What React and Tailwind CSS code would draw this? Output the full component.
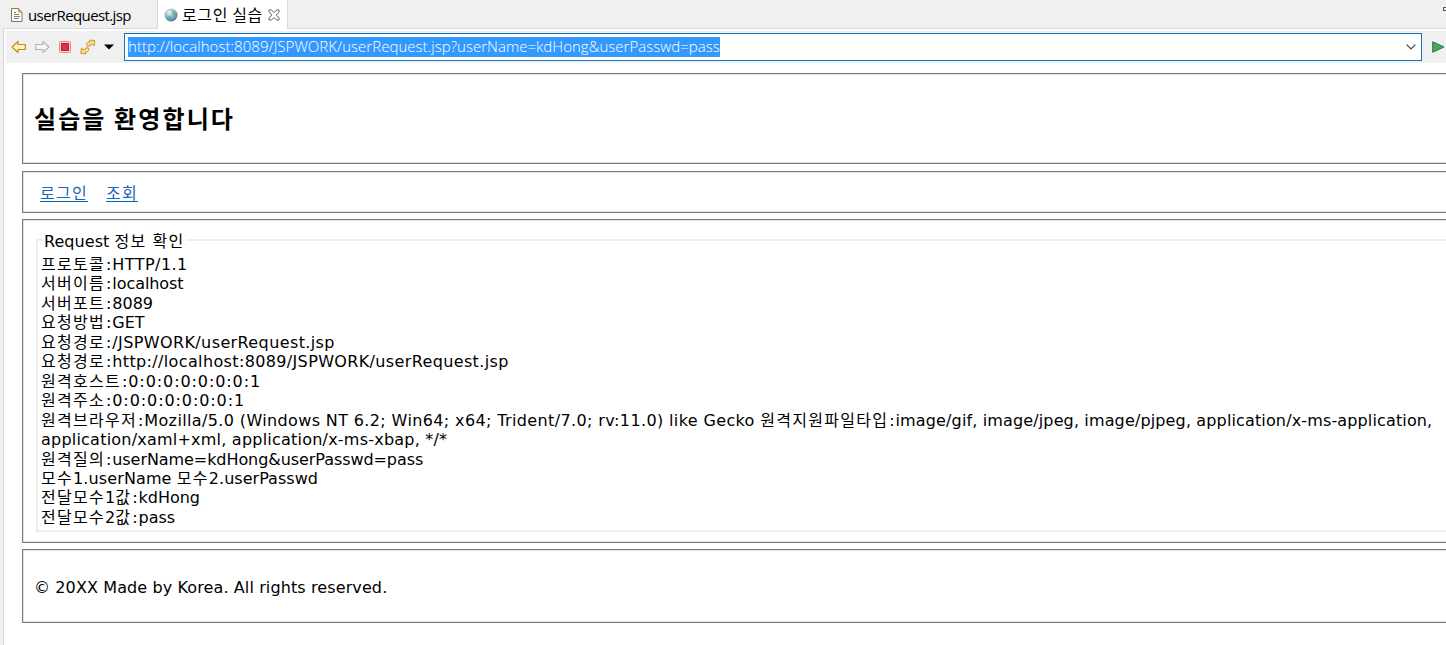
const rows = [
  [['프로토콜', 'ko'], [':HTTP/1.1', 'tracking-[0.46px]']],
  [['서버이름', 'ko'], [':localhost', 'tracking-[-0.06px]']],
  [['서버포트', 'ko'], [':8089', 'tracking-[0px]']],
  [['요청방법', 'ko'], [':GET', 'tracking-[0px]']],
  [['요청경로', 'ko'], [':/JSPWORK/userRequest.jsp', 'tracking-[0.39px]']],
  [['요청경로', 'ko'], [':http://localhost:8089/JSPWORK/userRequest.jsp', 'tracking-[0.36px]']],
  [['원격호스트', 'ko'], [':0:0:0:0:0:0:0:1', 'tracking-[0.91px]']],
  [['원격주소', 'ko'], [':0:0:0:0:0:0:0:1', 'tracking-[0.91px]']],
  [
    ['원격브라우저', 'ko'],
    [':Mozilla/5.0 (Windows NT 6.2; Win64; x64; Trident/7.0; rv:11.0) like Gecko ', 'tracking-[0.37px]'],
    ['원격지원파일타입', 'ko'],
    [':image/gif, image/jpeg, image/pjpeg, application/x-ms-application,', 'tracking-[0.14px]'],
  ],
  [['application/xaml+xml, application/x-ms-xbap, */*', 'tracking-[0.22px]']],
  [['원격질의', 'ko'], [':userName=kdHong&userPasswd=pass', 'tracking-[-0.07px]']],
  [['모수', 'ko'], ['1.userName ', 'tracking-[0.12px]'], ['모수', 'ko'], ['2.userPasswd', 'tracking-[0.03px]']],
  [['전달모수', 'ko'], ['1', 'tracking-[0px]'], ['값', 'ko'], [':kdHong', 'tracking-[0px]']],
  [['전달모수', 'ko'], ['2', 'tracking-[0px]'], ['값', 'ko'], [':pass', 'tracking-[0px]']],
]

function Run({ text, kind }) {
  if (kind === 'ko') {
    return <span className="font-['Noto_Sans_CJK_KR',sans-serif] leading-none tracking-[1.28px]">{text}</span>
  }
  if (text.startsWith(':')) {
    return (
      <>
        <span className="ml-px tracking-[0.87px]">:</span>
        <span className={kind}>{text.slice(1)}</span>
      </>
    )
  }
  return <span className={kind}>{text}</span>
}

function Panel({ className, children }) {
  return (
    <section className={`-mr-[4px] shrink-0 border border-[#7b7b7b] bg-white shadow-[inset_0_0_0_1px_#e2e2e2] ${className}`}>
      {children}
    </section>
  )
}

function FileIcon() {
  return (
    <svg width="12" height="14" viewBox="0 0 12 14" className="shrink-0">
      <path d="M.5.5h7l3.500 3.500v9.500H.5z" fill="#fffdf2" stroke="#8f7a4e" />
      <path d="M7.500.500v3.500h3.500z" fill="#e8cf8e" stroke="#a58a4f" />
      <path d="M3 4.500h2M3 6.500h5M3 8.500h6M3 10.500h5" stroke="#7080b0" />
    </svg>
  )
}

function GlobeIcon() {
  return (
    <svg width="14" height="14" viewBox="0 0 14 14" className="shrink-0">
      <defs>
        <radialGradient id="globe" cx="38%" cy="30%" r="75%">
          <stop offset="0" stopColor="#e8f3f5" />
          <stop offset=".55" stopColor="#86b5c0" />
          <stop offset="1" stopColor="#3a6ca3" />
        </radialGradient>
      </defs>
      <circle cx="7" cy="7" r="6.500" fill="url(#globe)" />
      <path d="M3 8q3-1 4 1t-1 3.500Q3 11 3 8zM8 3q3 0 4.500 3-1 3-3 2T8 3z" fill="#5fae86" opacity=".6" />
    </svg>
  )
}

function TabCloseIcon() {
  return (
    <svg width="12" height="12" viewBox="0 0 12 12" className="block shrink-0">
      <path d="M1 1h2.500L6 3.500 8.500 1H11v2L8.300 6 11 9v2H8.500L6 8.500 3.500 11H1V9l2.700-3L1 3z" fill="#fff" stroke="#555" strokeWidth=".9" />
    </svg>
  )
}

function Toolbar() {
  return (
    <div className="ml-[3px] flex h-[32px] shrink-0 items-center bg-[#f0f0f0]">
      <svg width="16" height="14" viewBox="0 0 16 14" className="ml-[5px] shrink-0">
        <path d="M1 7l6-5.500V4.500h7.300v5H7v3z" fill="#fff3c4" stroke="#c58a1c" strokeWidth="1.200" strokeLinejoin="round" />
      </svg>
      <svg width="16" height="14" viewBox="0 0 16 14" className="ml-[7px] shrink-0">
        <path d="M15 7L9 1.500V4.500H1.700v5H9v3z" fill="#f6f6f6" stroke="#b4b4b4" strokeWidth="1.100" strokeLinejoin="round" />
      </svg>
      <svg width="12" height="12" viewBox="0 0 12 12" className="ml-[9px] shrink-0">
        <rect x=".5" y=".5" width="11" height="11" rx="1" fill="#f7dada" stroke="#dc8a8a" />
        <rect x="2.500" y="2.500" width="7" height="7" fill="#e5303f" stroke="#c01c2b" />
      </svg>
      <svg width="16" height="16" viewBox="0 0 16 16" className="ml-[9px] shrink-0">
        <path d="M7.300 7.200C5.800 5 7.200 2.700 10 2.900L9.800 1l4.900.6-.8 5.200-1.500-1.300C11 4.800 10 5.400 10.200 6.800z" fill="#fbe08b" stroke="#c58a1c" strokeWidth=".9" strokeLinejoin="round" />
        <path d="M8.200 8.800C9.700 11 8.300 13.300 5.500 13.100L5.700 15 .8 14.400l.8-5.200 1.500 1.300C4.500 11.200 5.500 10.600 5.300 9.200z" fill="#fbe08b" stroke="#c58a1c" strokeWidth=".9" strokeLinejoin="round" />
      </svg>
      <svg width="10" height="6" viewBox="0 0 10 6" className="ml-[8px] shrink-0">
        <path d="M0 .5h10L5 5.500z" fill="#000" />
      </svg>
      <div className="ml-[10px] flex h-[28px] w-[1298px] shrink-0 items-center border border-[#1474bd] bg-white pl-[3px]">
        <span className="flex h-[20px] items-center whitespace-nowrap bg-[#3399ff] pb-[2px] font-['Open_Sans',sans-serif] text-[15px] font-light tracking-[0.035px] text-white">
          http://localhost:8089/JSPWORK/userRequest.jsp?userName=kdHong&amp;userPasswd=pass
        </span>
        <svg width="10" height="6" viewBox="0 0 10 6" className="mr-[5px] ml-auto shrink-0">
          <path d="M.7.700L5 5 9.300.700" fill="none" stroke="#444" strokeWidth="1.200" />
        </svg>
      </div>
      <svg width="13" height="12" viewBox="0 0 13 12" className="ml-[10px] shrink-0">
        <path d="M.7.700L12 6 .7 11.300z" fill="#45a85c" stroke="#2c7d45" />
      </svg>
    </div>
  )
}

export default function App() {
  return (
    <div className="flex h-[645px] w-[1446px] overflow-hidden bg-white font-['DejaVu_Sans','Noto_Sans_CJK_KR',sans-serif] text-[16px] text-black">
      <div className="w-[4px] shrink-0 border-r border-[#d4d4d4] bg-[#f0f0f0]" />
      <div className="-ml-px flex min-w-0 flex-1 flex-col">
        <header className="flex h-[29px] shrink-0 bg-[#f0f0f0]">
          <div className="flex w-[155px] items-center border-r border-b border-[#dadada] pt-[2px] pl-[8px]">
            <FileIcon />
            <span className="ml-[5px] font-['Open_Sans',sans-serif] text-[15px] tracking-[-0.6px]">userRequest.jsp</span>
          </div>
          <div className="flex w-[129px] items-center bg-white pt-px pl-[6px]">
            <GlobeIcon />
            <span className="ml-[4px] whitespace-nowrap pb-[2px] font-['Noto_Sans_CJK_KR',sans-serif] text-[16px] tracking-[0.6px]">로그인 실습</span>
            <span className="ml-[5px]"><TabCloseIcon /></span>
          </div>
          <div className="flex flex-1 items-start justify-end border-b border-l border-[#dadada] pt-[7px]">
            <div className="h-[4px] w-[3px] border border-r-0 border-[#555]" />
          </div>
        </header>
        <div className="h-[2px] shrink-0" />
        <Toolbar />
        <main className="flex flex-col pt-[10px] pl-[19px]">
          <Panel className="flex h-[91px] items-center pb-px pl-[11px]">
            <h1 className="font-['Noto_Sans_CJK_KR',sans-serif] text-[24px] font-bold tracking-[2.1px]">실습을 환영합니다</h1>
          </Panel>
          <Panel className="mt-[7px] flex h-[42px] items-center gap-[18px] pl-[17px] font-['Noto_Sans_CJK_KR',sans-serif] tracking-[1.28px] text-[#1a66b8]">
            <a className="border-b border-[#0066b4] leading-[18px]">로그인</a>
            <a className="border-b border-[#0066b4] leading-[18px]">조회</a>
          </Panel>
          <Panel className="mt-[6px] h-[324px] pt-[10px] pl-[13px]">
            <fieldset className="h-[302px] border-2 border-r-0 border-[#eeeeee] pl-[3px]">
              <legend className="ml-px h-[20px] px-[2px] pt-[2px] leading-[20px]">
                <Run text="Request " kind="tracking-[0.05px]" />
                <Run text="정보" kind="ko" />
                <Run text=" " kind="tracking-[0.8px]" />
                <Run text="확인" kind="ko" />
              </legend>
              <div className="pt-[5px]">
                {rows.map((runs, i) => (
                  <p key={i} className="h-[19.46px] whitespace-pre leading-[19.46px]">
                    {runs.map(([text, kind], j) => <Run key={j} text={text} kind={kind} />)}
                  </p>
                ))}
              </div>
            </fieldset>
          </Panel>
          <Panel className="mt-[6px] flex h-[74px] items-center pt-[4px] pl-[11px]">
            <p className="tracking-[0.11px]">© 20XX Made by Korea. All rights reserved.</p>
          </Panel>
        </main>
      </div>
    </div>
  )
}
